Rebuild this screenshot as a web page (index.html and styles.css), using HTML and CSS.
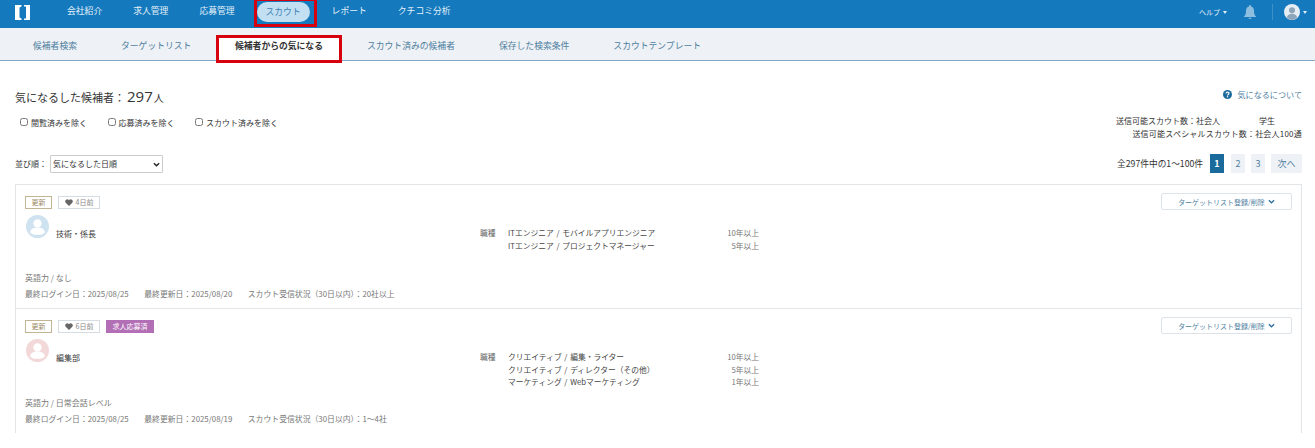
FILE: index.html
```html
<!DOCTYPE html>
<html lang="ja">
  <head>
    <meta charset="UTF-8" />
    <title>スカウト</title>
    <link rel="stylesheet" href="styles.css">
  </head>
  <body>
    <!-- Top navigation -->
    <header class="topbar">
      <svg class="logo" viewBox="0 0 15 15" width="15" height="15">
        <path fill="#fff" d="M0 0h6.500v1.500L4.500 2.500v10l2 1V15H0zM15 0H9v1.500h2v12H9V15h6z" />
      </svg>
      <nav class="main-nav">
        <a>会社紹介</a>
        <a>求人管理</a>
        <a>応募管理</a>
        <span class="marked-nav"><a class="pill">スカウト</a></span>
        <a>レポート</a>
        <a>クチコミ分析</a>
      </nav>
      <div class="top-right">
        <span class="help">ヘルプ<i class="caret"></i></span>
        <svg class="bell" viewBox="0 0 12 14" width="12" height="14">
          <path fill="#8fbfe0" d="M6 0a1 1 0 0 1 1 1v.6c2 .5 3 2.200 3 4.400 0 3 .6 4 2 5.500v.5H0v-.5C1.400 10 2 9 2 6c0-2.200 1-3.900 3-4.400V1a1 1 0 0 1 1-1zM4.500 12.800h3A1.500 1.200 0 0 1 6 14a1.500 1.200 0 0 1-1.500-1.200z" />
        </svg>
        <span class="divider"></span>
        <svg class="user" viewBox="0 0 16 16" width="16" height="16">
          <circle cx="8" cy="8" r="8" fill="#e6eef5" />
          <circle cx="8" cy="6.200" r="3" fill="#8ea6ba" />
          <path fill="#8ea6ba" d="M2.800 13.500c.6-2.600 2.600-3.700 5.200-3.700s4.600 1.100 5.200 3.700A8 8 0 0 1 8 16a8 8 0 0 1-5.200-2.500z" />
        </svg>
        <i class="caret"></i>
      </div>
    </header>

    <!-- Scout tabs -->
    <nav class="tabs">
      <a>候補者検索</a>
      <a>ターゲットリスト</a>
      <a class="active">候補者からの気になる</a>
      <a>スカウト済みの候補者</a>
      <a>保存した検索条件</a>
      <a>スカウトテンプレート</a>
    </nav>

    <main class="content">
      <div class="row row-title">
        <h1>気になるした候補者：<strong>297</strong><small>人</small></h1>
        <a class="about">
          <svg viewBox="0 0 10 10" width="9" height="9">
            <circle cx="5" cy="5" r="5" fill="#1b6a9c" />
            <path fill="none" stroke="#fff" stroke-width="1.300" d="M3.400 3.900c0-2 3.300-2 3.300-.2 0 1.200-1.700 1.200-1.700 2.400" />
            <rect x="4.300" y="6.800" width="1.400" height="1.400" fill="#fff" />
          </svg>
          気になるについて
        </a>
      </div>

      <div class="row row-filter">
        <div class="checks">
          <label><input type="checkbox" />閲覧済みを除く</label>
          <label><input type="checkbox" />応募済みを除く</label>
          <label><input type="checkbox" />スカウト済みを除く</label>
        </div>
        <div class="quota">
          <p>送信可能スカウト数：社会人<span class="student">学生</span></p>
          <p class="quota-special">送信可能スペシャルスカウト数：社会人100通</p>
        </div>
      </div>

      <div class="row row-sort">
        <div class="sort">
          <span>並び順：</span>
          <div class="select-wrap">
            <select>
              <option>気になるした日順</option>
            </select>
            <svg class="select-arrow" viewBox="0 0 8 5" width="7" height="5"><path fill="none" stroke="#222" stroke-width="1.600" d="M1 1l3 3 3-3" /></svg>
          </div>
        </div>
        <div class="pager">
          <span class="count">全297件中の1～100件</span>
          <a class="page current">1</a>
          <a class="page">2</a>
          <a class="page">3</a>
          <a class="page next">次へ</a>
        </div>
      </div>

      <!-- Candidate list -->
      <section class="list">
        <article class="card">
          <div class="card-head">
            <div class="tags">
              <span class="tag tag-new">更新</span>
              <span class="tag tag-like"><svg class="heart" viewBox="0 0 10 9" width="8" height="7"><path fill="#666" d="M5 9 .8 4.800A2.500 2.500 0 0 1 5 1.500a2.500 2.500 0 0 1 4.200 3.300z" /></svg>4日前</span>
            </div>
            <button class="target-btn">ターゲットリスト登録/削除<svg viewBox="0 0 8 5" width="7" height="5"><path fill="none" stroke="#2b6f9e" stroke-width="1.500" d="M1 1l3 3 3-3" /></svg></button>
          </div>
          <div class="card-body">
            <svg class="avatar" viewBox="0 0 22 22" width="23" height="23">
              <circle cx="11" cy="11" r="11" fill="#cfe2f0" />
              <circle cx="11" cy="8" r="4" fill="#fff" />
              <path fill="#fff" d="M4 17c0-3.500 3-5 7-5s7 1.500 7 5c-2 1.500-4 2-7 2s-5-.5-7-2z" />
            </svg>
            <p class="position">技術・係長</p>
            <div class="jobs">
              <span class="jobs-label">職種</span>
              <span>ITエンジニア / モバイルアプリエンジニア</span><span class="years">10年以上</span>
              <span class="jobs-pad"></span>
              <span>ITエンジニア / プロジェクトマネージャー</span><span class="years">5年以上</span>
            </div>
          </div>
          <div class="card-foot">
            <p>英語力 / なし</p>
            <p class="dates"><span>最終ログイン日：2025/08/25</span><span>最終更新日：2025/08/20</span><span>スカウト受信状況（30日以内）：20社以上</span></p>
          </div>
        </article>

        <article class="card">
          <div class="card-head">
            <div class="tags">
              <span class="tag tag-new">更新</span>
              <span class="tag tag-like"><svg class="heart" viewBox="0 0 10 9" width="8" height="7"><path fill="#666" d="M5 9 .8 4.800A2.500 2.500 0 0 1 5 1.500a2.500 2.500 0 0 1 4.200 3.300z" /></svg>6日前</span>
              <span class="tag tag-applied">求人応募済</span>
            </div>
            <button class="target-btn">ターゲットリスト登録/削除<svg viewBox="0 0 8 5" width="7" height="5"><path fill="none" stroke="#2b6f9e" stroke-width="1.500" d="M1 1l3 3 3-3" /></svg></button>
          </div>
          <div class="card-body">
            <svg class="avatar" viewBox="0 0 22 22" width="23" height="23">
              <circle cx="11" cy="11" r="11" fill="#f3d8da" />
              <circle cx="11" cy="8" r="4" fill="#fff" />
              <path fill="#fff" d="M4 17c0-3.500 3-5 7-5s7 1.500 7 5c-2 1.500-4 2-7 2s-5-.5-7-2z" />
            </svg>
            <p class="position">編集部</p>
            <div class="jobs">
              <span class="jobs-label">職種</span>
              <span>クリエイティブ / 編集・ライター</span><span class="years">10年以上</span>
              <span class="jobs-pad"></span>
              <span>クリエイティブ / ディレクター（その他）</span><span class="years">5年以上</span>
              <span class="jobs-pad"></span>
              <span>マーケティング / Webマーケティング</span><span class="years">1年以上</span>
            </div>
          </div>
          <div class="card-foot">
            <p>英語力 / 日常会話レベル</p>
            <p class="dates"><span>最終ログイン日：2025/08/25</span><span>最終更新日：2025/08/19</span><span>スカウト受信状況（30日以内）：1～4社</span></p>
          </div>
        </article>
      </section>
    </main>
  </body>
</html>
```

FILE: styles.css
```css
:root {
  --blue: #1479bd;
  --tab-text: #4f7f9f;
  --red: #d6000f;
  --meta: #777;
  --line: #e3e6e9;
}

* {
  box-sizing: border-box;
}

body {
  margin: 0;
  background: #fff;
  color: #333;
  font-family: "Noto Sans CJK JP", "Open Sans", sans-serif;
  font-size: 8px;
  overflow: hidden;
}

p {
  margin: 0;
}

/* Top bar */
.topbar {
  display: flex;
  align-items: flex-start;
  height: 28px;
  padding: 0 8px 0 15px;
  background: var(--blue);
  color: #e3f0f9;
  font-size: 8.800px;
}

.logo {
  flex: none;
  margin-top: 5px;
}

.main-nav {
  display: flex;
  align-items: flex-start;
  gap: 31px;
  margin-left: 37px;
  line-height: 21px;
}

.marked-nav {
  width: 63px;
  height: 27px;
  margin: 0 -16px 0 -12px;
  border: 3px solid var(--red);
  border-top-width: 1px;
}

.pill {
  display: block;
  width: 53px;
  height: 20px;
  margin-top: 1px;
  border-radius: 10px;
  background: #c3e0f2;
  color: #3f82b4;
  line-height: 19px;
  text-align: center;
}

.top-right {
  display: flex;
  align-items: center;
  height: 24px;
  margin-left: auto;
}

.help {
  display: flex;
  align-items: center;
  font-size: 7px;
}

.caret {
  display: inline-block;
  margin-left: 3px;
  border: 2.500px solid transparent;
  border-top: 3px solid #e3f0f9;
  border-bottom: 0;
}

.bell {
  margin-left: 17px;
}

.divider {
  width: 1px;
  height: 16px;
  margin: 0 11px 0 16px;
  background: #3d90c8;
}

/* Tabs */
.tabs {
  display: flex;
  align-items: flex-start;
  height: 33px;
  padding: 0 0 0 11px;
  background: #eef1f5;
  border-bottom: 1px solid #7fa9c6;
  color: var(--tab-text);
  font-size: 8.800px;
}

.tabs a {
  padding: 9px 22px 0;
  line-height: 18px;
}

.tabs .active {
  height: 28px;
  margin: 7px 0 0 2.600px;
  padding: 0 16px;
  border: 3px solid var(--red);
  background: #fff;
  color: #333;
  font-weight: 700;
  line-height: 16px;
}

.tabs .active + a {
  padding-left: 25px;
}

/* Summary rows */
.content {
  padding: 0 13px 0 15px;
}

.row {
  display: flex;
  justify-content: space-between;
}

.row-title {
  align-items: center;
  height: 20px;
  margin-top: 25px;
}

h1 {
  margin: 0;
  font-size: 11px;
  font-weight: 400;
}

h1 strong {
  margin-left: 2px;
  font-family: "Open Sans", sans-serif;
  font-size: 15px;
  font-weight: 400;
}

h1 small {
  margin-left: 1px;
  font-size: 10px;
}

.about {
  display: flex;
  align-items: center;
  gap: 5px;
  margin-top: -4px;
  color: var(--tab-text);
  font-size: 8.100px;
}

.row-filter {
  height: 28px;
  margin-top: 8px;
}

.checks {
  display: flex;
  gap: 20.500px;
  height: 12px;
  margin-top: 2px;
  padding-left: 5px;
}

.checks label {
  display: flex;
  align-items: center;
  gap: 3px;
}

.checks input {
  width: 8px;
  height: 8px;
  margin: 0;
}

.quota {
  width: 186px;
  text-align: right;
  line-height: 13px;
}

.quota p:first-child {
  text-align: left;
}

.quota-special {
  letter-spacing: .22px;
}

.student {
  margin-left: 39px;
}

.row-sort {
  align-items: center;
  height: 19px;
  margin-top: 12px;
}

.sort {
  display: flex;
  align-items: center;
  gap: 3px;
}

.select-wrap {
  position: relative;
  display: flex;
}

.sort select {
  width: 113px;
  height: 18px;
  padding: 0 0 0 2px;
  border: 1px solid #ccc;
  border-radius: 1px;
  background: #fff;
  color: #333;
  font-family: inherit;
  font-size: 8px;
  appearance: none;
}

.select-arrow {
  position: absolute;
  top: 7px;
  right: 3px;
}

.pager {
  display: flex;
  align-items: center;
  gap: 6px;
  height: 19px;
}

.count {
  margin-right: 1px;
  font-size: 8.700px;
}

.page {
  width: 14px;
  height: 19px;
  background: #eef1f5;
  color: var(--tab-text);
  font-size: 9px;
  line-height: 19px;
  text-align: center;
}

.page.current {
  margin-right: 1px;
  background: #1b6a9c;
  color: #fff;
  font-weight: 700;
}

.page.next {
  width: 31px;
}

/* Candidate cards */
.list {
  margin-top: 11px;
  border: 1px solid var(--line);
  border-bottom: 0;
}

.card {
  display: flex;
  flex-direction: column;
  height: 124px;
  padding: 8px 9px 0 9px;
  border-bottom: 1px solid var(--line);
}

.card:last-child {
  border-bottom: 0;
}

.card-head {
  display: flex;
  justify-content: space-between;
  align-items: flex-start;
}

.tags {
  display: flex;
  gap: 6px;
  margin-top: 3px;
}

.tag {
  display: flex;
  align-items: center;
  justify-content: center;
  height: 13px;
  border: 1px solid #d5dce3;
  color: #888;
  font-size: 7px;
  line-height: 1;
}

.tag-new {
  width: 27px;
  border-color: #c2b594;
  color: #9c8c66;
}

.tag-like {
  gap: 3px;
  width: 42px;
}

.tag-applied {
  width: 48px;
  border: 0;
  background: #b26fb5;
  color: #fff;
}

.target-btn {
  display: flex;
  align-items: center;
  justify-content: center;
  gap: 3px;
  width: 131px;
  height: 17px;
  padding: 0;
  border: 1px solid #dde3e8;
  border-radius: 2px;
  background: #fff;
  color: var(--tab-text);
  font-family: inherit;
  font-size: 7px;
}

.card-body {
  display: grid;
  grid-template-columns: 31px 424px auto;
  align-items: start;
  margin-top: 5px;
}

.avatar {
  margin-left: 1px;
}

.position {
  margin-top: 12px;
  line-height: 14px;
}

.jobs {
  display: grid;
  grid-template-columns: 28px 180px 71px;
  margin-top: 12px;
  color: #444;
  font-size: 7.750px;
  line-height: 12.500px;
  word-spacing: 1px;
}

.jobs-label {
  color: #666;
}

.years {
  color: #777;
  text-align: right;
}

.card-foot {
  margin-top: auto;
  padding-bottom: 6px;
  color: var(--meta);
  line-height: 16px;
}

.dates {
  display: flex;
  gap: 15.500px;
  font-size: 7.850px;
}
```
